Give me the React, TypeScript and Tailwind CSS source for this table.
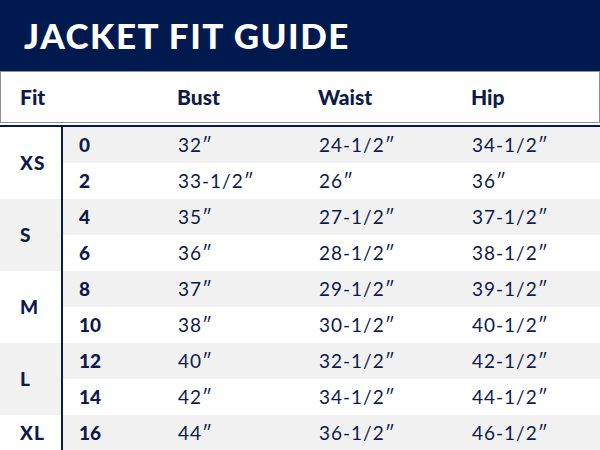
// Jacket fit guide — size chart table

const groups = [
  { fit: 'XS', rows: [['0', '32″', '24-1/2″', '34-1/2″'], ['2', '33-1/2″', '26″', '36″']] },
  { fit: 'S', rows: [['4', '35″', '27-1/2″', '37-1/2″'], ['6', '36″', '28-1/2″', '38-1/2″']] },
  { fit: 'M', rows: [['8', '37″', '29-1/2″', '39-1/2″'], ['10', '38″', '30-1/2″', '40-1/2″']] },
  { fit: 'L', rows: [['12', '40″', '32-1/2″', '42-1/2″'], ['14', '42″', '34-1/2″', '44-1/2″']] },
  { fit: 'XL', rows: [['16', '44″', '36-1/2″', '46-1/2″']] },
]

const cols = 'grid grid-cols-[115px_141px_153px_1fr] items-center'

export default function App() {
  let rowIndex = 0
  return (
    <div className="w-[600px] h-[450px] overflow-hidden bg-white text-[#0d1a4a] font-['Lato','Liberation_Sans',sans-serif]">
      <div className="h-[71px] bg-[#00194f] flex items-center pl-[24px]">
        <h1 className="text-[35px] font-black text-white tracking-[1.5px] leading-none">
          JACKET FIT GUIDE
        </h1>
      </div>

      <div className="h-[52px] border border-[#8d929e] flex items-center text-[21px] font-black">
        <div className="w-[61px] pl-[19px]">Fit</div>
        <div className="flex-1 grid grid-cols-[115px_141px_153px_1fr]">
          <div />
          <div>Bust</div>
          <div>Waist</div>
          <div>Hip</div>
        </div>
      </div>

      <div className="mt-[2px] h-[2px] bg-[#00194f]" />

      <div className="flex flex-col">
        {groups.map((g, gi) => (
          <div key={g.fit} className="flex">
            <div
              className={`w-[63px] border-r-2 border-[#0d1a4a] flex items-center pl-[20px] text-[19px] font-black tracking-[1px] ${
                gi % 2 === 1 ? 'bg-[#f1f1f1]' : 'bg-white'
              }`}
            >
              {g.fit}
            </div>
            <div className="flex-1 flex flex-col">
              {g.rows.map((r) => {
                const shaded = rowIndex++ % 2 === 0
                return (
                  <div
                    key={r[0]}
                    className={`${cols} h-[36px] text-[19px] ${shaded ? 'bg-[#f1f1f1]' : 'bg-white'}`}
                  >
                    <div className="pl-[16px] font-black">{r[0]}</div>
                    <div className="tracking-[1px]">{r[1]}</div>
                    <div className="tracking-[1px]">{r[2]}</div>
                    <div className="tracking-[1px]">{r[3]}</div>
                  </div>
                )
              })}
            </div>
          </div>
        ))}
      </div>
    </div>
  )
}
